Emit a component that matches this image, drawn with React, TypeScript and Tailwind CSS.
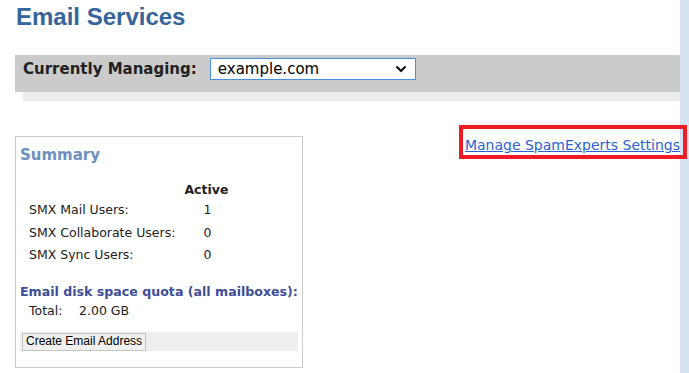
import React from 'react';

const rows = [
  { label: 'SMX Mail Users:', value: '1' },
  { label: 'SMX Collaborate Users:', value: '0' },
  { label: 'SMX Sync Users:', value: '0' },
];

export default function App() {
  return (
    <div className="relative flex h-[373px] w-[689px] overflow-hidden bg-white font-['DejaVu_Sans',sans-serif] text-[12.5px] text-[#222]">
      <div className="flex-1 pl-[15px]">
        <h1 className="mt-[3px] h-[28px] pl-px font-['Liberation_Sans',Arial,sans-serif] text-[24px] font-bold leading-[28px] text-[#35659b]">
          Email Services
        </h1>

        {/* domain picker bar */}
        <div className="mt-[24px] flex h-[37px] items-start bg-[#cbcbcb] pl-[8px] pt-[3px]">
          <span className="mt-[2px] text-[15px] font-bold leading-[18px] text-[#222]">Currently Managing:</span>
          <div className="ml-[13px] flex h-[22px] w-[206px] items-center justify-between border border-[#4a90e2] bg-white pl-[7px] pr-[8px]">
            <span className="text-[15px] leading-[18px] text-black">example.com</span>
            <svg width="12" height="8" viewBox="0 0 12 8" fill="none">
              <path d="M1.5 1.5 6 6l4.5-4.5" stroke="#111" strokeWidth="2.2" />
            </svg>
          </div>
        </div>
        <div className="ml-[8px] h-[9px] bg-[#ececec]" />

        <div className="mt-[35px] flex items-start justify-between">
          {/* summary panel */}
          <div className="h-[232px] w-[288px] border border-[#cccccc] px-[4px]">
            <h2 className="mt-[9px] text-[15px] font-bold leading-[18px] text-[#6c90bf]">Summary</h2>
            <table className="ml-[9px] mt-[17px] border-collapse">
              <thead>
                <tr>
                  <th />
                  <th className="h-[18px] pl-[9px] text-left text-[12.5px] font-bold leading-[16px]">Active</th>
                </tr>
              </thead>
              <tbody>
                {rows.map((r) => (
                  <tr key={r.label} className="h-[22.5px]">
                    <td className="leading-[16px]">{r.label}</td>
                    <td className="pl-[28px] leading-[16px]">{r.value}</td>
                  </tr>
                ))}
              </tbody>
            </table>
            <div className="mt-[17px] whitespace-nowrap text-[12.6px] font-bold leading-[16px] text-[#3d4e98]">
              Email disk space quota (all mailboxes):
            </div>
            <div className="ml-[9px] mt-[3px] flex leading-[16px]">
              <span className="w-[50px]">Total:</span>
              <span>2.00 GB</span>
            </div>
            <div className="mt-[13px] flex h-[19px] items-start bg-[#eeeeee] pl-[2px] pt-px">
              <button className="h-[18px] border border-[#c6c6c6] bg-[#f0f0f0] px-[3px] font-['Liberation_Sans',Arial,sans-serif] text-[12px] leading-[15px] text-black">
                Create Email Address
              </button>
            </div>
          </div>

          <a href="#" className="mt-[1px] text-[14px] leading-[17px] text-[#2a63d4] underline">
            Manage SpamExperts Settings
          </a>
        </div>
      </div>

      <div className="w-[9px] bg-[#d5e1f1]" />

      {/* highlight annotation */}
      <div className="pointer-events-none absolute left-[459px] top-[125px] h-[34px] w-[228px] border-[4px] border-[#ee1c25]" />
    </div>
  );
}
